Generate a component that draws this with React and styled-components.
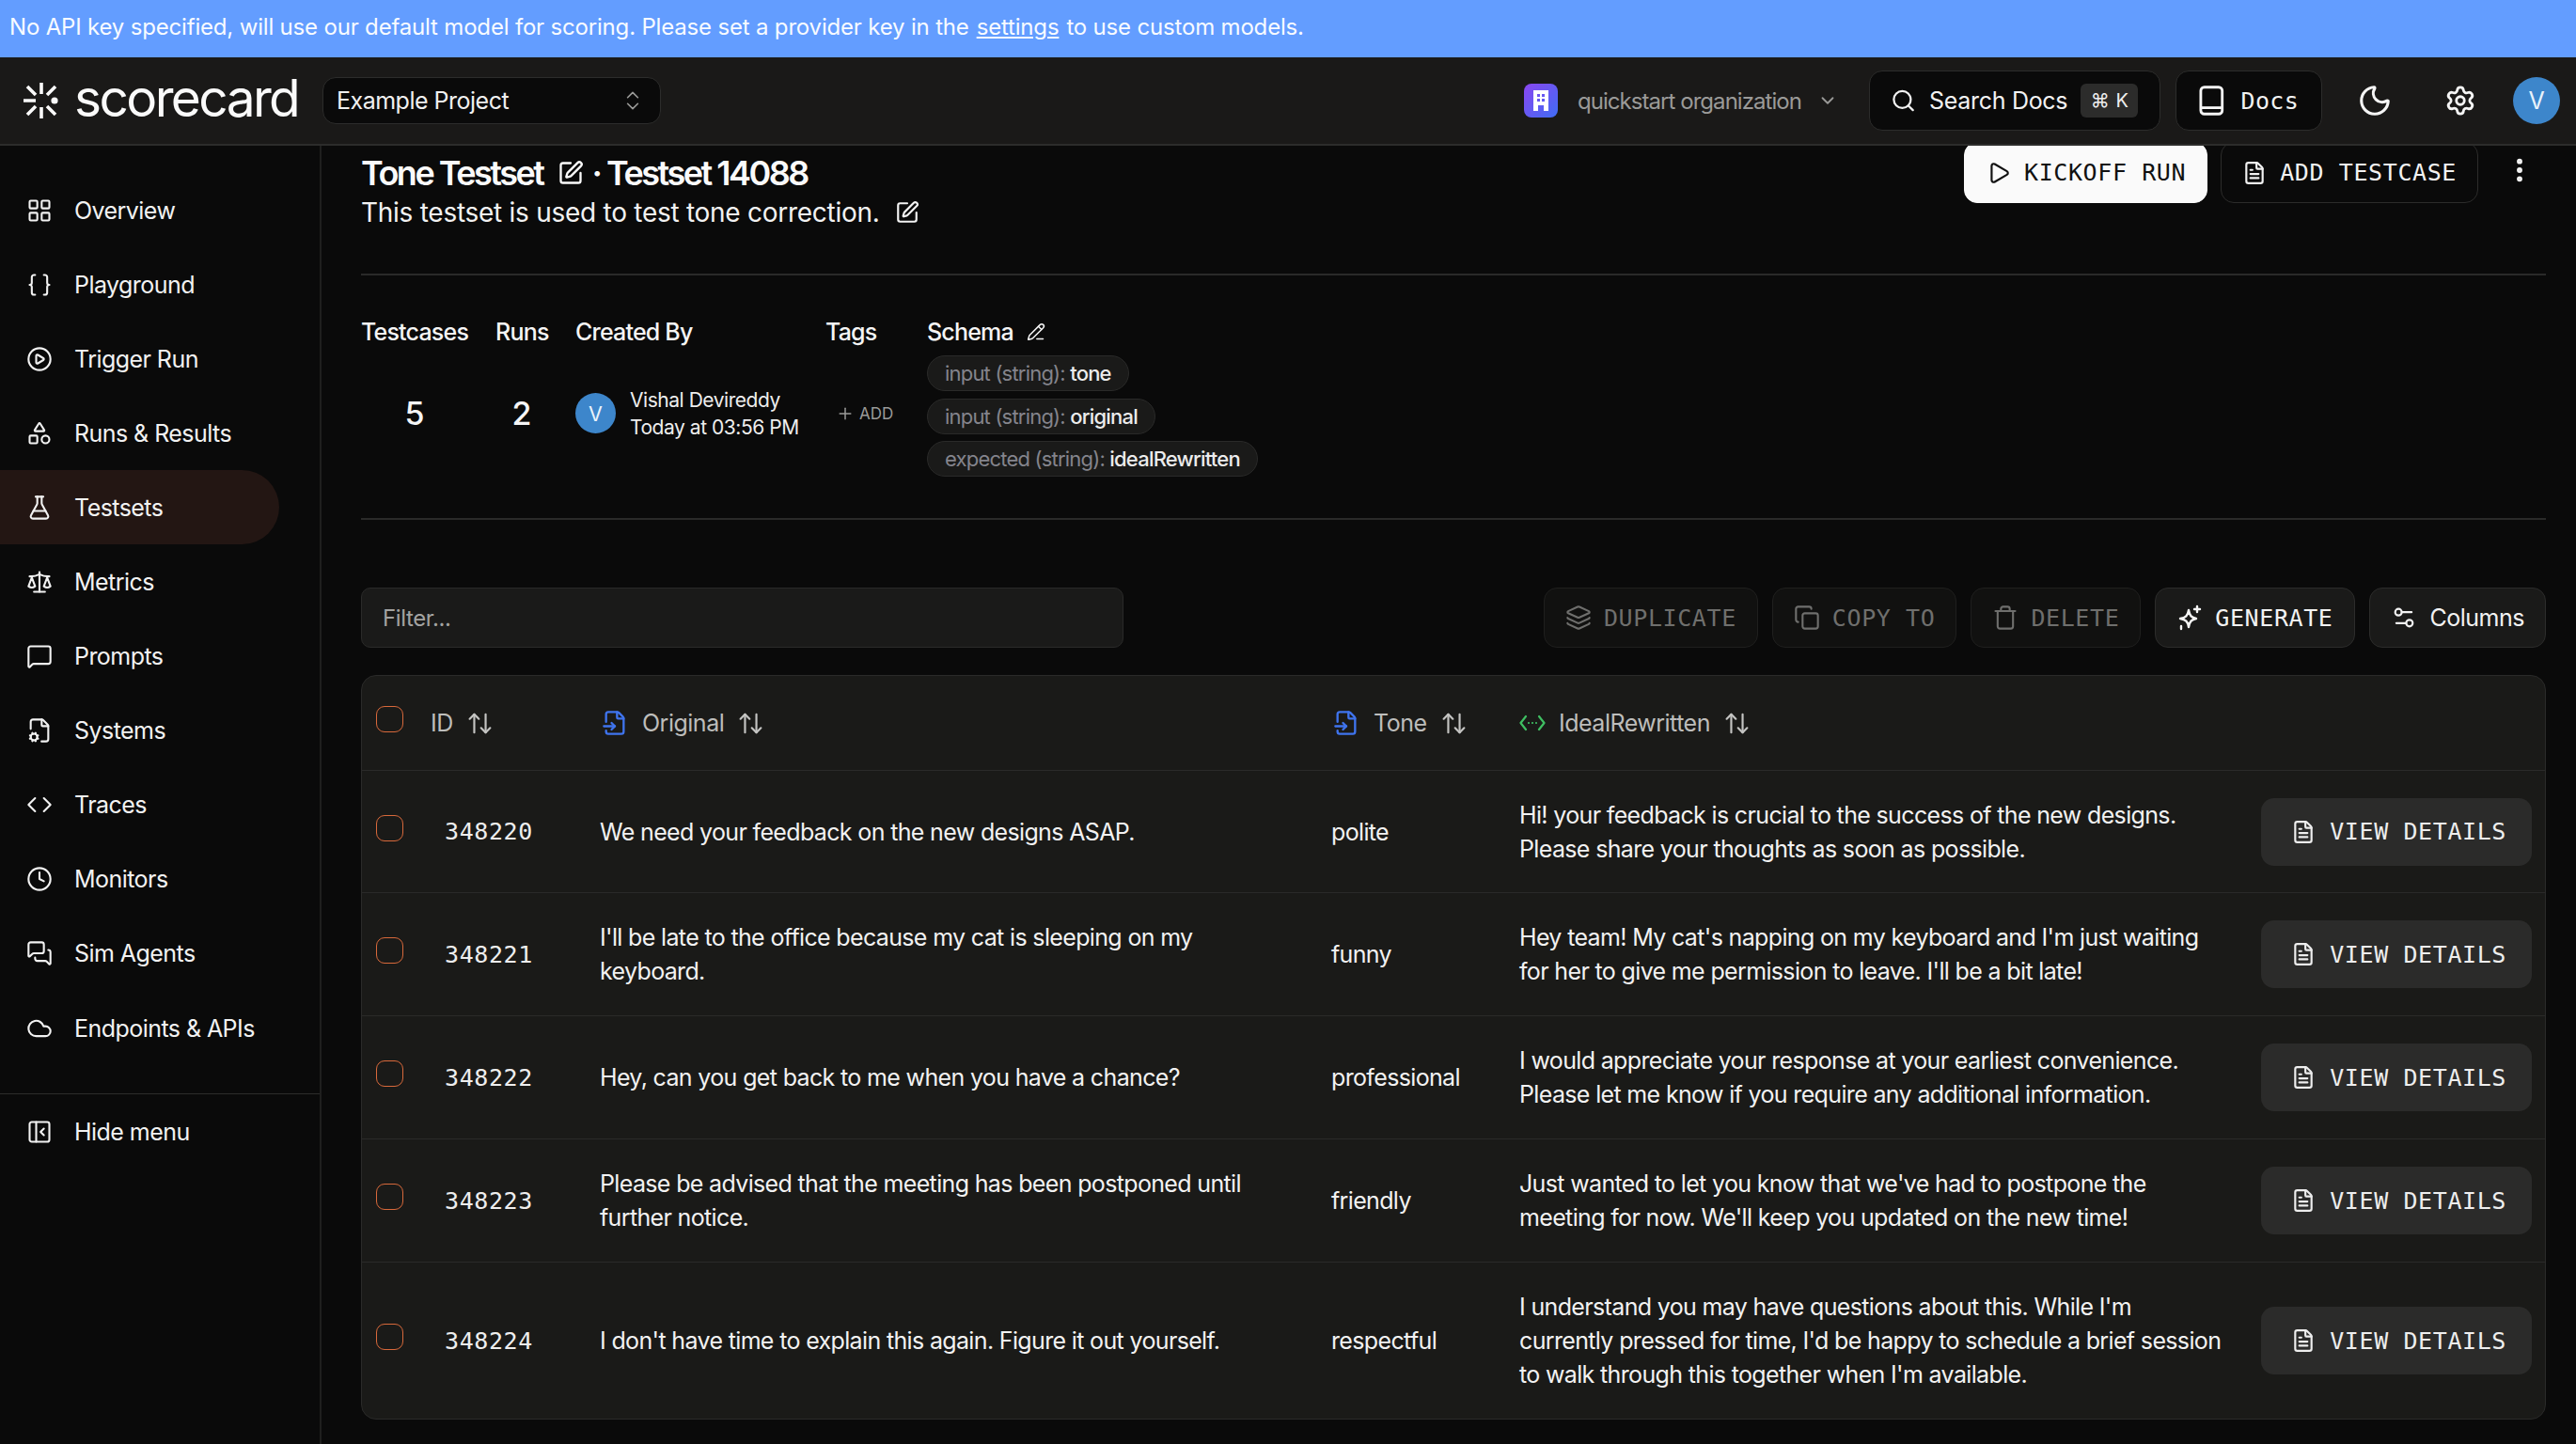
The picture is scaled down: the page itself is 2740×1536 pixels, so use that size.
import React from "react";
import styled, { createGlobalStyle } from "styled-components";
import {
  LayoutGrid, Braces, CirclePlay, Shapes, FlaskConical, Scale, MessageSquare, FileCog, Code, Clock,
  MessagesSquare, Cloud, PanelLeftClose, ChevronsUpDown, ChevronDown, Search, Moon, Settings, Play,
  FileText, EllipsisVertical, SquarePen, PencilLine, Plus, Layers, Copy, Trash, Settings2, ArrowUpDown, FileInput,
} from "lucide-react";

const sans = `Inter, "Liberation Sans", sans-serif`;
const mono = `"DejaVu Sans Mono", "Liberation Mono", monospace`;

const Global = createGlobalStyle`
  html, body { margin: 0; padding: 0; background: #0a0a0a; }
  body { width: 2740px; height: 1536px; overflow: hidden; font-family: ${sans}; color: #f5f5f5; }
  * { box-sizing: border-box; }
`;

const Page = styled.div`
  width: 2740px; height: 1536px; display: flex; flex-direction: column; overflow: hidden;
`;
const Banner = styled.div`
  height: 61px; flex: none; background: #639dff; color: #f8fbff; display: flex; align-items: center;
  padding: 0 10px 5px; font-size: 24px; letter-spacing: -0.18px;
  a { color: inherit; text-decoration: underline; margin: 0 8px; }
`;
const Header = styled.header`
  height: 94px; flex: none; background: #1a1918; border-bottom: 2px solid #2c2c2b; display: flex;
  align-items: center; padding: 0 17px 0 25px;
`;
const Logo = styled.div`
  display: flex; align-items: center; gap: 16px; font-size: 55px; letter-spacing: -2.6px; color: #fafafa; width: 318px; flex: none;
  span { line-height: 1; position: relative; top: -3px; }
`;
const ProjectSelect = styled.div`
  width: 360px; height: 50px; background: #0a0a0a; border: 1px solid #2c2c2b; border-radius: 14px; display: flex;
  align-items: center; justify-content: space-between; padding: 0 16px 0 14px; font-size: 25px; letter-spacing: -0.5px; color: #f0f0f0;
`;
const Spacer = styled.div` flex: 1; `;
const Org = styled.div`
  display: flex; align-items: center; color: #9a9a98; font-size: 24px; letter-spacing: -0.95px; margin-right: 33px;
`;
const OrgBadge = styled.div`
  width: 36px; height: 36px; border-radius: 8px; margin-right: 21px; display: flex; align-items: center; justify-content: center;
  background: linear-gradient(135deg, #8a46f0, #3f6df5);
`;
const HeaderBox = styled.div`
  height: 64px; background: #0a0a0a; border: 1px solid #2c2c2b; border-radius: 14px; display: flex; align-items: center;
  font-size: 25px; letter-spacing: -0.3px; color: #f2f2f2; white-space: nowrap;
`;
const SearchBox = styled(HeaderBox)` width: 310px; padding: 0 23px 0 22px; gap: 14px; margin-right: 16px; `;
const Kbd = styled.div`
  margin-left: auto; width: 63px; height: 36px; border-radius: 6px; background: #2c2c2b; color: #eee; font-size: 20px;
  display: flex; align-items: center; justify-content: center; gap: 7px;
`;
const DocsBox = styled(HeaderBox)`
  width: 156px; padding: 0 24px 0 24px; gap: 18px; margin-right: 37px;
  font-family: ${mono}; font-size: 25px; letter-spacing: 0.3px;
`;
const HeaderIcon = styled.div` display: flex; margin-right: ${p => p.$mr}px; color: #f5f5f5; `;
const Avatar = styled.div`
  width: ${p => p.$size}px; height: ${p => p.$size}px; border-radius: 50%; background: #3d86cb; color: #eaf3fb; flex: none;
  display: flex; align-items: center; justify-content: center; font-size: ${p => p.$size / 2}px;
`;

const Main = styled.div` flex: 1; display: flex; min-height: 0; `;
const Sidebar = styled.nav`
  width: 342px; flex: none; border-right: 2px solid #1f1f1e; padding-top: 29px;
`;
const NavItem = styled.div`
  height: 79.1px; width: 297px; display: flex; align-items: center; gap: 23px; padding-left: 28px; font-size: 25px; letter-spacing: -0.55px;
  color: #f2f2f2; background: ${p => (p.$active ? "#231613" : "transparent")}; border-radius: 0 40px 40px 0;
`;
const NavDivider = styled.div` height: 1px; background: #2c2c2b; margin-top: 30px; `;

const Content = styled.main` flex: 1; min-width: 0; padding: 0 32px 0 42px; overflow: hidden; `;
const Head = styled.section`
  margin-top: -3px; height: 141px; border-bottom: 2px solid #2a2a29; display: flex; justify-content: space-between;
`;
const HeadText = styled.div` padding-top: 10px; `;
const Title = styled.h1`
  margin: 0; font-size: 36px; line-height: 44px; font-weight: 600; letter-spacing: -2.5px; color: #fafafa; display: flex; align-items: center; gap: 16px;
`;
const Description = styled.p`
  margin: 2px 0 0; font-size: 28px; line-height: 36px; letter-spacing: -0.27px; color: #f2f2f2; display: flex; align-items: center; gap: 16px;
`;
const HeadActions = styled.div` display: flex; align-items: flex-start; gap: 14px; margin-top: -1px; `;
const MonoButton = styled.button`
  height: ${p => p.$h || 64}px; display: flex; align-items: center; gap: 13px; padding: 0 22px; border-radius: 14px; font-family: ${mono};
  font-size: 25px; letter-spacing: 0.6px; white-space: nowrap;
  color: ${p => (p.$primary ? "#111" : p.$dim ? "#6f6f6d" : "#f2f2f2")};
  background: ${p => (p.$primary ? "#fafafa" : p.$filled ? "#1a1a19" : p.$dim ? "#111110" : "#0a0a0a")};
  border: 1px solid ${p => (p.$primary ? "#fafafa" : p.$dim ? "#1f1f1e" : "#2c2c2b")};
`;
const Kebab = styled.div` margin: 14px 12px 0 14px; display: flex; `;

const Stats = styled.section`
  height: 260px; padding-top: 44px; border-bottom: 2px solid #2a2a29; display: grid;
  grid-template-columns: 114px 56px 237px 79px auto; grid-template-rows: 32px 138px; column-gap: 29px; justify-content: start;
`;
const StatLabel = styled.div`
  font-size: 25px; line-height: 32px; font-weight: 500; letter-spacing: -0.8px; color: #f5f5f5; white-space: nowrap; display: flex; align-items: center; gap: 14px;
`;
const StatValue = styled.div`
  font-size: 34px; font-weight: 500; text-align: center; align-self: center; color: #f5f5f5; margin-top: 3px;
`;
const Creator = styled.div`
  display: flex; align-items: center; gap: 15px; align-self: center; margin-top: 3px;
`;
const CreatorText = styled.div` font-size: 21px; line-height: 29px; letter-spacing: -0.46px; color: #eee; white-space: nowrap; `;
const AddTag = styled.div`
  display: flex; align-items: center; gap: 5px; align-self: center; color: #9a9a98; font-size: 17px; margin: 3px 0 0 11px;
`;
const Pills = styled.div` display: flex; flex-direction: column; align-items: flex-start; gap: 7.5px; padding-top: 9px; `;
const Pill = styled.div`
  height: 38px; padding: 0 18px; border-radius: 19px; background: #1a1a19; border: 1px solid #2a2a29; display: flex; align-items: center;
  font-size: 22px; letter-spacing: -0.8px; color: #84848c; white-space: pre;
  b { font-weight: 500; color: #ececec; }
`;

const Toolbar = styled.section` margin-top: 72px; display: flex; align-items: center; gap: 15px; `;
const Filter = styled.div`
  width: 811px; height: 64px; margin-right: auto; background: #1a1a19; border: 1px solid #2a2a29; border-radius: 10px; display: flex;
  align-items: center; padding-left: 22px; font-size: 24px; letter-spacing: -0.4px; color: #a3a3a1;
`;
const ColumnsButton = styled(MonoButton)`
  font-family: ${sans}; font-size: 25px; letter-spacing: -0.5px; padding: 0 22px; gap: 14px;
`;

const Table = styled.section`
  margin-top: 29px; background: #1a1a18; border: 1px solid #2a2a29; border-radius: 16px; overflow: hidden;
`;
const Row = styled.div`
  display: grid; grid-template-columns: 73px 180px 778px 200px 1fr auto; align-items: center;
  min-height: ${p => p.$h}px; border-bottom: ${p => (p.$last ? "none" : "1px solid #2a2a29")};
`;
const CheckCell = styled.div` display: flex; justify-content: center; padding-left: 13px; padding-right: 27px; margin-bottom: 8px; `;
const Check = styled.div` width: 29px; height: 28px; border: 1.5px solid #d8693b; border-radius: 9px; `;
const HeadCell = styled.div`
  display: flex; align-items: center; font-size: 25px; letter-spacing: -0.5px; color: #bdbdbb; padding-left: ${p => p.$pl || 0}px;
  span { margin: 0 14px 0 ${p => p.$gap ?? 0}px; }
`;
const IdCell = styled.div` font-family: ${mono}; font-size: 25px; letter-spacing: 0.6px; color: #eee; padding-left: 15px; `;
const TextCell = styled.div`
  font-size: 25px; line-height: 36px; letter-spacing: -0.65px; color: #f2f2f2; white-space: pre-line;
`;
const ActionCell = styled.div` padding-right: 14px; display: flex; justify-content: flex-end; `;
const ViewButton = styled(MonoButton)`
  height: 72px; background: #2b2b2a; border: none; gap: 15px; padding: 0 27px 0 32px; border-radius: 14px; color: #eee;
`;

const LogoMark = () => (
  <svg width="38" height="40" viewBox="0 0 38 40" fill="none" stroke="#fafafa" strokeWidth="3.6">
    <path d="M19 1v12M19 27v12M0 20h13M4 5l9 9M4 35l9-9M34 5l-9 9M34 35l-9-9" />
    <circle cx="33" cy="20" r="3.6" fill="#fafafa" stroke="none" />
  </svg>
);
const Building = () => (
  <svg width="22" height="26" viewBox="0 0 22 26" fill="#fff">
    <path fillRule="evenodd" d="M3 2h16v22h-5v-6H8v6H3zM7 6v3h3V6zm5 0v3h3V6zM7 11v3h3v-3zm5 0v3h3v-3z" />
  </svg>
);
const DocBook = () => (
  <svg width="28" height="34" viewBox="0 0 28 34" fill="none" stroke="#f5f5f5" strokeWidth="3">
    <rect x="2" y="2" width="24" height="30" rx="4" />
    <path d="M2 25h24" />
  </svg>
);
const Sparkle = () => (
  <svg width="28" height="28" viewBox="0 0 28 28" fill="none" stroke="#f5f5f5" strokeWidth="2.4" strokeLinejoin="round" strokeLinecap="round">
    <path d="M13 6c1 6 3 8 8 9-5 1-7 3-8 9-1-6-3-8-9-9 6-1 8-3 9-9z" />
    <path d="M22 2v6M19 5h6M5 23v3" />
  </svg>
);
const CodeDots = () => (
  <svg width="28" height="20" viewBox="0 0 28 20" fill="none" stroke="#3fbf62" strokeWidth="2.2" strokeLinecap="round" strokeLinejoin="round">
    <path d="M7 3L1.5 10 7 17M21 3l5.5 7L21 17M10 10h.01M14 10h.01M18 10h.01" />
  </svg>
);

const navItems = [
  [LayoutGrid, "Overview"], [Braces, "Playground"], [CirclePlay, "Trigger Run"], [Shapes, "Runs & Results"],
  [FlaskConical, "Testsets", true], [Scale, "Metrics"], [MessageSquare, "Prompts"], [FileCog, "Systems"],
  [Code, "Traces"], [Clock, "Monitors"], [MessagesSquare, "Sim Agents"], [Cloud, "Endpoints & APIs"],
];

const rows = [
  { id: "348220", h: 130, original: "We need your feedback on the new designs ASAP.", tone: "polite",
    ideal: "Hi! your feedback is crucial to the success of the new designs.\nPlease share your thoughts as soon as possible." },
  { id: "348221", h: 131, original: "I'll be late to the office because my cat is sleeping on my\nkeyboard.", tone: "funny",
    ideal: "Hey team! My cat's napping on my keyboard and I'm just waiting\nfor her to give me permission to leave. I'll be a bit late!" },
  { id: "348222", h: 131, original: "Hey, can you get back to me when you have a chance?", tone: "professional",
    ideal: "I would appreciate your response at your earliest convenience.\nPlease let me know if you require any additional information." },
  { id: "348223", h: 131, original: "Please be advised that the meeting has been postponed until\nfurther notice.", tone: "friendly",
    ideal: "Just wanted to let you know that we've had to postpone the\nmeeting for now. We'll keep you updated on the new time!" },
  { id: "348224", h: 166, original: "I don't have time to explain this again. Figure it out yourself.", tone: "respectful", last: true,
    ideal: "I understand you may have questions about this. While I'm\ncurrently pressed for time, I'd be happy to schedule a brief session\nto walk through this together when I'm available." },
];

const Sort = () => <ArrowUpDown size={29} strokeWidth={1.8} color="#c4c4c2" />;

export default function App() {
  return (
    <Page>
      <Global />
      <Banner>
        No API key specified, will use our default model for scoring. Please set a provider key in the<a href="#settings">settings</a>to use custom models.
      </Banner>
      <Header>
        <Logo><LogoMark /><span>scorecard</span></Logo>
        <ProjectSelect>Example Project<ChevronsUpDown size={26} strokeWidth={1.5} color="#9a9a98" /></ProjectSelect>
        <Spacer />
        <Org>
          <OrgBadge><Building /></OrgBadge>
          quickstart organization
          <ChevronDown size={22} strokeWidth={2} style={{ marginLeft: 17 }} />
        </Org>
        <SearchBox>
          <Search size={28} strokeWidth={2} />Search Docs
          <Kbd><span>⌘</span><span>K</span></Kbd>
        </SearchBox>
        <DocsBox><DocBook />Docs</DocsBox>
        <HeaderIcon $mr={55}><Moon size={38} strokeWidth={2} /></HeaderIcon>
        <HeaderIcon $mr={39}><Settings size={34} strokeWidth={2} /></HeaderIcon>
        <Avatar $size={50}>V</Avatar>
      </Header>
      <Main>
        <Sidebar>
          {navItems.map(([Icon, label, active]) => (
            <NavItem key={label} $active={active}><Icon size={28} strokeWidth={1.8} />{label}</NavItem>
          ))}
          <NavDivider />
          <NavItem><PanelLeftClose size={28} strokeWidth={1.8} />Hide menu</NavItem>
        </Sidebar>
        <Content>
          <Head>
            <HeadText>
              <Title>
                Tone Testset <SquarePen size={28} strokeWidth={2} /> <span style={{ marginLeft: -8 }}>· Testset 14088</span>
              </Title>
              <Description>This testset is used to test tone correction. <SquarePen size={26} strokeWidth={2} /></Description>
            </HeadText>
            <HeadActions>
              <MonoButton $primary $h={65} style={{ paddingLeft: 23, gap: 14 }}><Play size={26} strokeWidth={2} color="#111" />KICKOFF RUN</MonoButton>
              <MonoButton $h={65} style={{ gap: 14 }}><FileText size={26} strokeWidth={2} />ADD TESTCASE</MonoButton>
              <Kebab><EllipsisVertical size={32} strokeWidth={2.4} color="#f5f5f5" /></Kebab>
            </HeadActions>
          </Head>
          <Stats>
            <StatLabel>Testcases</StatLabel>
            <StatLabel>Runs</StatLabel>
            <StatLabel>Created By</StatLabel>
            <StatLabel>Tags</StatLabel>
            <StatLabel>Schema <PencilLine size={20} strokeWidth={1.8} /></StatLabel>
            <StatValue>5</StatValue>
            <StatValue>2</StatValue>
            <Creator>
              <Avatar $size={43}>V</Avatar>
              <CreatorText>Vishal Devireddy<br />Today at 03:56 PM</CreatorText>
            </Creator>
            <AddTag><Plus size={20} strokeWidth={1.8} />ADD</AddTag>
            <Pills>
              <Pill>input (string): <b>tone</b></Pill>
              <Pill>input (string): <b>original</b></Pill>
              <Pill>expected (string): <b>idealRewritten</b></Pill>
            </Pills>
          </Stats>
          <Toolbar>
            <Filter>Filter...</Filter>
            <MonoButton $dim><Layers size={28} strokeWidth={1.8} />DUPLICATE</MonoButton>
            <MonoButton $dim><Copy size={28} strokeWidth={1.8} />COPY TO</MonoButton>
            <MonoButton $dim><Trash size={28} strokeWidth={1.8} />DELETE</MonoButton>
            <MonoButton $filled><Sparkle />GENERATE</MonoButton>
            <ColumnsButton $filled><Settings2 size={28} strokeWidth={1.8} />Columns</ColumnsButton>
          </Toolbar>
          <Table>
            <Row $h={101}>
              <CheckCell><Check /></CheckCell>
              <HeadCell><span>ID</span><Sort /></HeadCell>
              <HeadCell $pl={2} $gap={15}><FileInput size={28} strokeWidth={2} color="#3f74ee" /><span>Original</span><Sort /></HeadCell>
              <HeadCell $pl={2} $gap={15}><FileInput size={28} strokeWidth={2} color="#3f74ee" /><span>Tone</span><Sort /></HeadCell>
              <HeadCell $gap={14}><CodeDots /><span>IdealRewritten</span><Sort /></HeadCell>
              <div />
            </Row>
            {rows.map(r => (
              <Row key={r.id} $h={r.h} $last={r.last}>
                <CheckCell><Check /></CheckCell>
                <IdCell>{r.id}</IdCell>
                <TextCell>{r.original}</TextCell>
                <TextCell>{r.tone}</TextCell>
                <TextCell>{r.ideal}</TextCell>
                <ActionCell><ViewButton><FileText size={26} strokeWidth={2} />VIEW DETAILS</ViewButton></ActionCell>
              </Row>
            ))}
          </Table>
        </Content>
      </Main>
    </Page>
  );
}
